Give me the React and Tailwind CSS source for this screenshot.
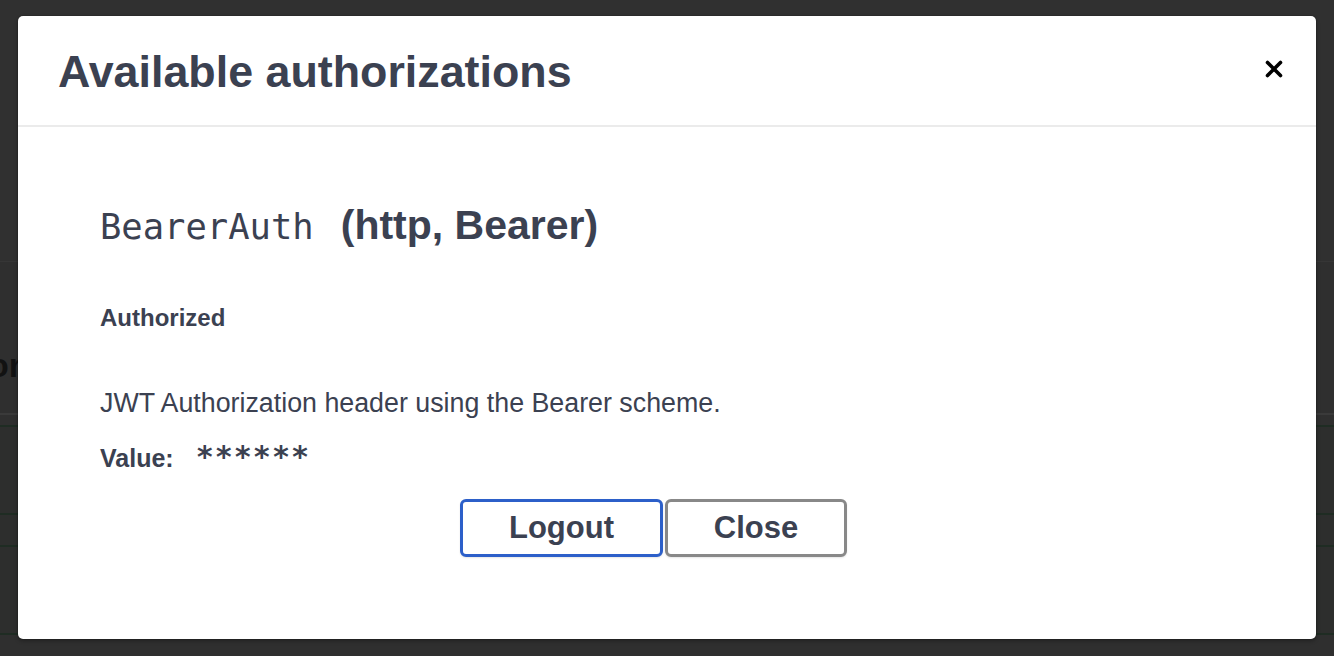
import React from "react";

export default function App() {
  const sans = { fontFamily: '"Liberation Sans", Arial, sans-serif' };
  return (
    <div className="relative w-[1334px] h-[656px] overflow-hidden bg-[#2f2f2f]" style={sans}>
      {/* dimmed page behind the dialog */}
      <div className="flex flex-col">
        <div className="h-[262px] bg-[#303030] border-b border-[#363636]" />
        <div className="h-[151px] flex items-start pt-[86px]">
          <span className="-ml-[12px] text-[34px] font-bold text-[#121212] leading-none">or</span>
        </div>
        <div className="h-[12px] border-t-2 border-[#3a3a3a]" />
        <div className="h-[88px] border-t-2 border-[#1f2c23] bg-[#2d2e2d]" />
        <div className="h-[32px] border-t-2 border-[#1f2c23] bg-[#2d2e2d]" />
        <div className="h-[88px] border-t-2 border-[#1f2c23] bg-[#2d2e2d]" />
        <div className="h-[30px] border-t-2 border-[#1f2c23] bg-[#2f2f2f]" />
      </div>

      {/* dialog */}
      <div className="absolute left-[18px] top-[16px] w-[1298px] h-[623px] bg-white rounded-[5px] shadow-[0_0_0_1px_rgba(0,0,0,0.08),0_2px_4px_rgba(0,0,0,0.3)] flex flex-col">
        <div className="h-[111px] flex items-center justify-between pl-[40px] pr-[33px] pt-[1px] border-b-2 border-[#ebebeb]">
          <h3 className="text-[44.8px] font-bold leading-none text-[#3b4151]">Available authorizations</h3>
          <button className="w-[18px] h-[18px] mb-[4px] flex items-center justify-center">
            <svg width="18" height="18" viewBox="0 0 18 18">
              <path d="M2.5 2.5 L15.5 15.5 M15.5 2.5 L2.5 15.5" stroke="#000" strokeWidth="3.6" strokeLinecap="round" />
            </svg>
          </button>
        </div>

        <div className="flex flex-col pl-[82px] pr-[109px] text-[#3b4151]">
          <h4 className="mt-[76px] leading-[44px] whitespace-nowrap">
            <code className="text-[35.5px]" style={{ fontFamily: '"DejaVu Sans Mono", monospace' }}>BearerAuth</code>
            <span className="ml-[27px] text-[41px] font-bold">(http, Bearer)</span>
          </h4>
          <h6 className="mt-[48px] text-[24px] font-bold leading-[28px]">Authorized</h6>
          <p className="mt-[55px] text-[26.8px] leading-[32px]">JWT Authorization header using the Bearer scheme.</p>
          <div className="mt-[22px] h-[32px] flex items-baseline leading-[32px]">
            <label className="text-[25px] font-bold">Value:</label>
            <code
              className="ml-[22px] text-[30px] font-bold tracking-[1px]"
              style={{ fontFamily: '"DejaVu Sans Mono", monospace' }}
            >
              ******
            </code>
          </div>
          <div className="mt-[26px] flex justify-center gap-[2px]">
            <button className="w-[203px] h-[58px] rounded-[6px] border-[3px] border-[#2c5fc9] bg-white text-[31px] font-bold text-[#3b4151] shadow-[0_1px_2px_rgba(0,0,0,0.1)]">
              Logout
            </button>
            <button className="w-[182px] h-[58px] rounded-[6px] border-[3px] border-[#888888] bg-white text-[31px] font-bold text-[#3b4151] shadow-[0_1px_2px_rgba(0,0,0,0.1)]">
              Close
            </button>
          </div>
        </div>
      </div>
    </div>
  );
}
